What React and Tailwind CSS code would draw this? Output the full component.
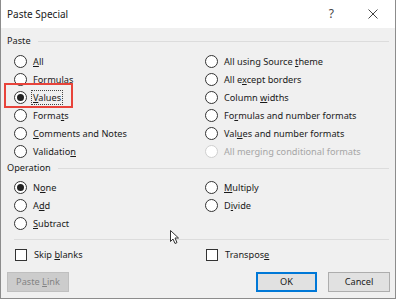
import React from 'react';

// label with one mnemonic letter underlined
function Mn({ text, u, className = '' }) {
  if (u < 0) return <span className={className}>{text}</span>;
  return (
    <span className={className}>
      {text.slice(0, u)}
      <span className="underline underline-offset-[1px]">{text[u]}</span>
      {text.slice(u + 1)}
    </span>
  );
}

function Radio({ text, u, checked, disabled, focus }) {
  return (
    <div className="flex h-[18px] items-center">
      <span
        className={`flex h-[13px] w-[13px] shrink-0 items-center justify-center rounded-full border bg-white ${
          disabled ? 'border-[#cfcfcf] bg-[#f5f5f5]' : 'border-[#333333]'
        }`}
      >
        {checked && <span className="h-[7px] w-[7px] rounded-full bg-[#222222]" />}
      </span>
      <span
        className={`ml-[4px] px-px leading-[13px] ${
          focus ? 'border border-dotted border-[#444444]' : 'border border-transparent'
        } ${disabled ? 'text-[#a6a6a6]' : 'text-[#1a1a1a]'}`}
      >
        <Mn text={text} u={u} />
      </span>
    </div>
  );
}

function Check({ text, u }) {
  return (
    <div className="flex h-[18px] items-center">
      <span className="ml-px h-[12px] w-[12px] shrink-0 border border-[#333333] bg-white" />
      <span className="ml-[5px] border border-transparent px-px text-[#1a1a1a]">
        <Mn text={text} u={u} />
      </span>
    </div>
  );
}

function GroupLabel({ children, lineLeft }) {
  return (
    <div className="flex h-[16px] items-center pl-[6px] pr-[6px]">
      <span className="text-[#1a1a1a]">{children}</span>
      <span className="ml-[8px] h-px flex-1 bg-[#dcdcdc]" style={{ marginLeft: lineLeft }} />
    </div>
  );
}

function Btn({ children, primary, disabled, w }) {
  return (
    <div
      className={`flex h-[20px] items-center justify-center border ${
        disabled
          ? 'border-[#bfbfbf] bg-[#cccccc] text-[#838383]'
          : primary
          ? 'border-[#0078d7] bg-[#e1e1e1] text-[#1a1a1a] shadow-[inset_0_0_0_1px_#0078d7]'
          : 'border-[#adadad] bg-[#e1e1e1] text-[#1a1a1a]'
      }`}
      style={{ width: w }}
    >
      {children}
    </div>
  );
}

export default function App() {
  const font = { fontFamily: '"Noto Sans", "Liberation Sans", sans-serif' };
  return (
    <div className="h-[300px] w-[396px] bg-white" style={font}>
      <div className="relative flex h-[299px] w-[396px] flex-col border-x border-b border-[#8c8c8c] bg-[#f0f0f0] text-[9.2px]">
        {/* title bar */}
        <div className="flex h-[28px] items-center bg-white pl-[6px]">
          <span className="text-[10px] text-[#1a1a1a]">Paste Special</span>
          <span className="ml-auto mr-[34px] text-[12px] text-[#444444]">?</span>
          <svg width="10" height="10" viewBox="0 0 10 10" className="mr-[17px]">
            <path d="M0.5 0.5 L9.5 9.5 M9.5 0.5 L0.5 9.5" stroke="#444444" strokeWidth="1" fill="none" />
          </svg>
        </div>

        <div className="mt-[5px]">
          <GroupLabel lineLeft={7}>Paste</GroupLabel>
        </div>

        <div className="mt-[3px] grid grid-cols-[191px_1fr] pl-[13px]">
          <div className="flex flex-col">
            <Radio text="All" u={0} />
            <Radio text="Formulas" u={0} />
            <div className="relative">
              <Radio text="Values" u={0} checked focus />
              <span className="absolute left-[-10px] top-[-14px] h-[25px] w-[69px] border-2 border-[#e8433a]" style={{ top: -5 }} />
            </div>
            <Radio text="Formats" u={5} />
            <Radio text="Comments and Notes" u={0} />
            <Radio text="Validation" u={9} />
          </div>
          <div className="flex flex-col">
            <Radio text="All using Source theme" u={17} />
            <Radio text="All except borders" u={5} />
            <Radio text="Column widths" u={7} />
            <Radio text="Formulas and number formats" u={2} />
            <Radio text="Values and number formats" u={3} />
            <Radio text="All merging conditional formats" u={-1} disabled />
          </div>
        </div>

        <GroupLabel lineLeft={7}>Operation</GroupLabel>

        <div className="mt-[2px] grid grid-cols-[191px_1fr] pl-[13px]">
          <div className="flex flex-col">
            <Radio text="None" u={1} checked />
            <Radio text="Add" u={1} />
            <Radio text="Subtract" u={0} />
          </div>
          <div className="flex flex-col">
            <Radio text="Multiply" u={0} />
            <Radio text="Divide" u={1} />
          </div>
        </div>

        <div className="ml-[13px] mr-[6px] mt-[7px] h-px bg-[#dcdcdc]" />

        <div className="mt-[6px] grid grid-cols-[191px_1fr] pl-[13px]">
          <Check text="Skip blanks" u={5} />
          <Check text="Transpose" u={8} />
        </div>

        <div className="mt-[8px] flex items-center pl-[6px] pr-[5px]">
          <Btn disabled w={62}>
            <Mn text="Paste Link" u={6} />
          </Btn>
          <div className="ml-auto flex gap-[11px]">
            <Btn primary w={61}>OK</Btn>
            <Btn w={62}>Cancel</Btn>
          </div>
        </div>

        {/* mouse pointer */}
        <svg width="10" height="15" viewBox="0 0 10 15" className="absolute left-[169px] top-[230px]">
          <path d="M0.5 0.5 L0.5 11.5 L3 9 L5 13.5 L7 12.6 L5 8 L8.5 8 Z" fill="white" stroke="#333333" strokeWidth="1" strokeLinejoin="round" />
        </svg>
      </div>
    </div>
  );
}
